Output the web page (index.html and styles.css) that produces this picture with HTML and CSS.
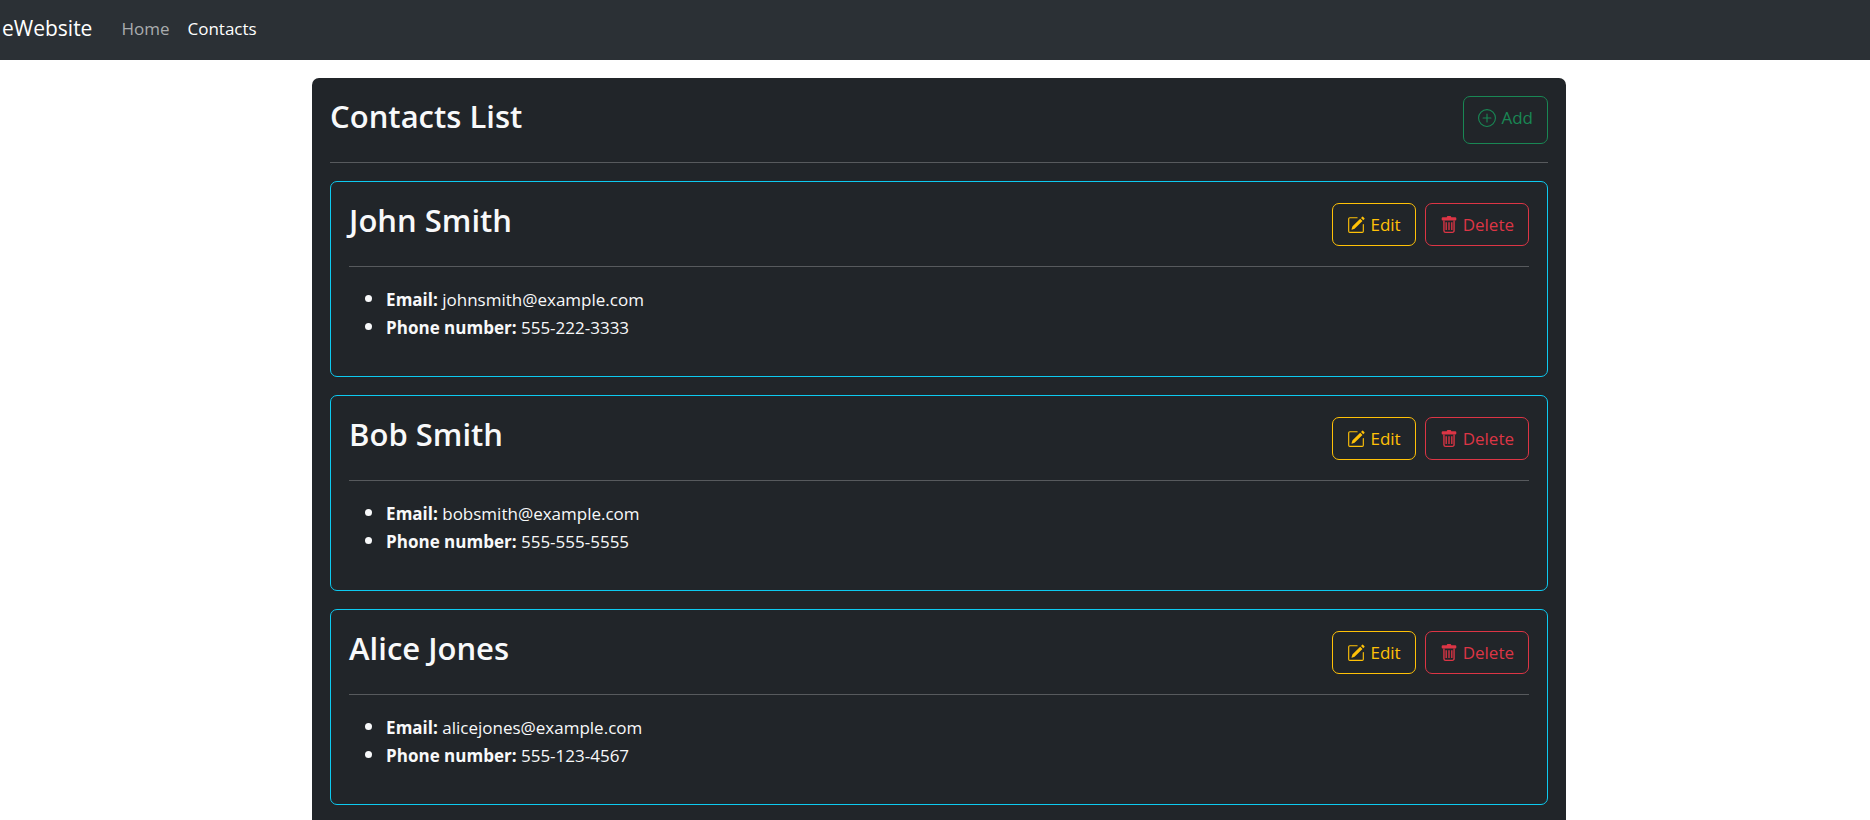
FILE: index.html
```html
<!DOCTYPE html>
<html lang="en">
<head>
<meta charset="utf-8">
<meta name="viewport" content="width=device-width, initial-scale=1">
<title>Contacts</title>
<link rel="stylesheet" href="styles.css">
</head>
<body>
<svg class="sprite" aria-hidden="true">
  <symbol id="plus-circle" viewBox="0 0 16 16">
    <path d="M8 15A7 7 0 1 1 8 1a7 7 0 0 1 0 14m0 1A8 8 0 1 0 8 0a8 8 0 0 0 0 16"/>
    <path d="M8 4a.5.5 0 0 1 .5.5v3h3a.5.5 0 0 1 0 1h-3v3a.5.5 0 0 1-1 0v-3h-3a.5.5 0 0 1 0-1h3v-3A.5.5 0 0 1 8 4"/>
  </symbol>
  <symbol id="pencil-square" viewBox="0 0 16 16">
    <path d="M15.502 1.94a.5.5 0 0 1 0 .706L14.459 3.69l-2-2L13.502.646a.5.5 0 0 1 .707 0l1.293 1.293zm-1.75 2.456-2-2L4.939 9.21a.5.5 0 0 0-.121.196l-.805 2.414a.25.25 0 0 0 .316.316l2.414-.805a.5.5 0 0 0 .196-.12z"/>
    <path fill-rule="evenodd" d="M1 13.5A1.5 1.5 0 0 0 2.5 15h11a1.5 1.5 0 0 0 1.5-1.5v-6a.5.5 0 0 0-1 0v6a.5.5 0 0 1-.5.5h-11a.5.5 0 0 1-.5-.5v-11a.5.5 0 0 1 .5-.5H9a.5.5 0 0 0 0-1H2.5A1.5 1.5 0 0 0 1 2.5z"/>
  </symbol>
  <symbol id="trash" viewBox="0 0 16 16">
    <path d="M7 0h2a1 1 0 0 1 1 1h3.500a1 1 0 0 1 1 1v1a1 1 0 0 1-1 1h-11a1 1 0 0 1-1-1V2a1 1 0 0 1 1-1H6a1 1 0 0 1 1-1z"/>
    <path d="M3.500 4v9A1.500 1.500 0 0 0 5 14.500h6a1.500 1.500 0 0 0 1.500-1.500V4M5.500 5.500v7M8 5.500v7M10.500 5.500v7" fill="none" stroke="currentColor" stroke-width="1.200"/>
  </symbol>
</svg>
<nav class="navbar">
  <a class="brand" href="#">eWebsite</a>
  <a class="nav-link" href="#">Home</a>
  <a class="nav-link active" href="#" aria-current="page">Contacts</a>
</nav>
<main class="panel">
  <header class="head">
    <h2>Contacts List</h2>
    <a class="btn btn-add" href="#"><svg class="icon"><use href="#plus-circle"/></svg>Add</a>
  </header>
  <hr>
  <article class="card">
    <div class="head">
      <h2>John Smith</h2>
      <div class="actions">
        <button type="button" class="btn btn-edit"><svg class="icon"><use href="#pencil-square"/></svg>Edit</button>
        <button type="button" class="btn btn-delete"><svg class="icon"><use href="#trash"/></svg>Delete</button>
      </div>
    </div>
    <hr>
    <ul>
      <li><strong>Email:</strong> johnsmith@example.com</li>
      <li><strong>Phone number:</strong> 555-222-3333</li>
    </ul>
  </article>
  <article class="card">
    <div class="head">
      <h2>Bob Smith</h2>
      <div class="actions">
        <button type="button" class="btn btn-edit"><svg class="icon"><use href="#pencil-square"/></svg>Edit</button>
        <button type="button" class="btn btn-delete"><svg class="icon"><use href="#trash"/></svg>Delete</button>
      </div>
    </div>
    <hr>
    <ul>
      <li><strong>Email:</strong> bobsmith@example.com</li>
      <li><strong>Phone number:</strong> 555-555-5555</li>
    </ul>
  </article>
  <article class="card">
    <div class="head">
      <h2>Alice Jones</h2>
      <div class="actions">
        <button type="button" class="btn btn-edit"><svg class="icon"><use href="#pencil-square"/></svg>Edit</button>
        <button type="button" class="btn btn-delete"><svg class="icon"><use href="#trash"/></svg>Delete</button>
      </div>
    </div>
    <hr>
    <ul>
      <li><strong>Email:</strong> alicejones@example.com</li>
      <li><strong>Phone number:</strong> 555-123-4567</li>
    </ul>
  </article>
</main>
</body>
</html>
```

FILE: styles.css
```css
* { box-sizing: border-box; }

body {
  margin: 0;
  min-height: 100vh;
  display: flex;
  flex-direction: column;
  background: #fff;
  color: #f8f9fa;
  font: 17px/27px "Segoe UI", "Open Sans", "Noto Sans", sans-serif;
}

.sprite { display: none; }

.navbar {
  display: flex;
  align-items: center;
  gap: 18px;
  height: 60px;
  padding: 0 2px 3px;
  background: #2b3035;
}

.navbar a { color: #fff; text-decoration: none; }
.navbar .brand { margin-right: 11px; font-size: 21px; }
.navbar .nav-link { color: #a9acae; }
.navbar .active { color: #fff; }

.panel {
  flex: 1;
  width: calc(67% + 1px);
  margin: 18px 304px 0 auto;
  padding: 18px 18px 14px;
  border-radius: 7px 7px 0 0;
  background: #212529;
}

.head {
  display: flex;
  justify-content: space-between;
  align-items: flex-start;
}

h2 {
  margin: 0;
  font-size: 31px;
  font-weight: 600;
  line-height: 40px;
}

hr {
  margin: 18px 0;
  border: 0;
  border-top: 1px solid #575a5d;
}

.card {
  padding: 18px;
  border: 1px solid #0dcaf0;
  border-radius: 7px;
}

.card + .card { margin-top: 18px; }

.actions {
  display: flex;
  gap: 9px;
  padding: 3px 0 2px;
}

.btn {
  display: inline-flex;
  align-items: center;
  gap: 5px;
  padding: 7px 14px;
  border: 1px solid currentColor;
  border-radius: 7px;
  background: transparent;
  font: inherit;
  text-decoration: none;
}

.btn-add { padding-bottom: 12px; color: #198754; }
.btn-edit { color: #ffc107; }
.btn-delete { color: #dc3545; }

.icon {
  width: 18px;
  height: 18px;
  fill: currentColor;
}

ul { margin: 0 0 17px; padding-left: 37px; }

li::marker { font-size: 20px; }
```
